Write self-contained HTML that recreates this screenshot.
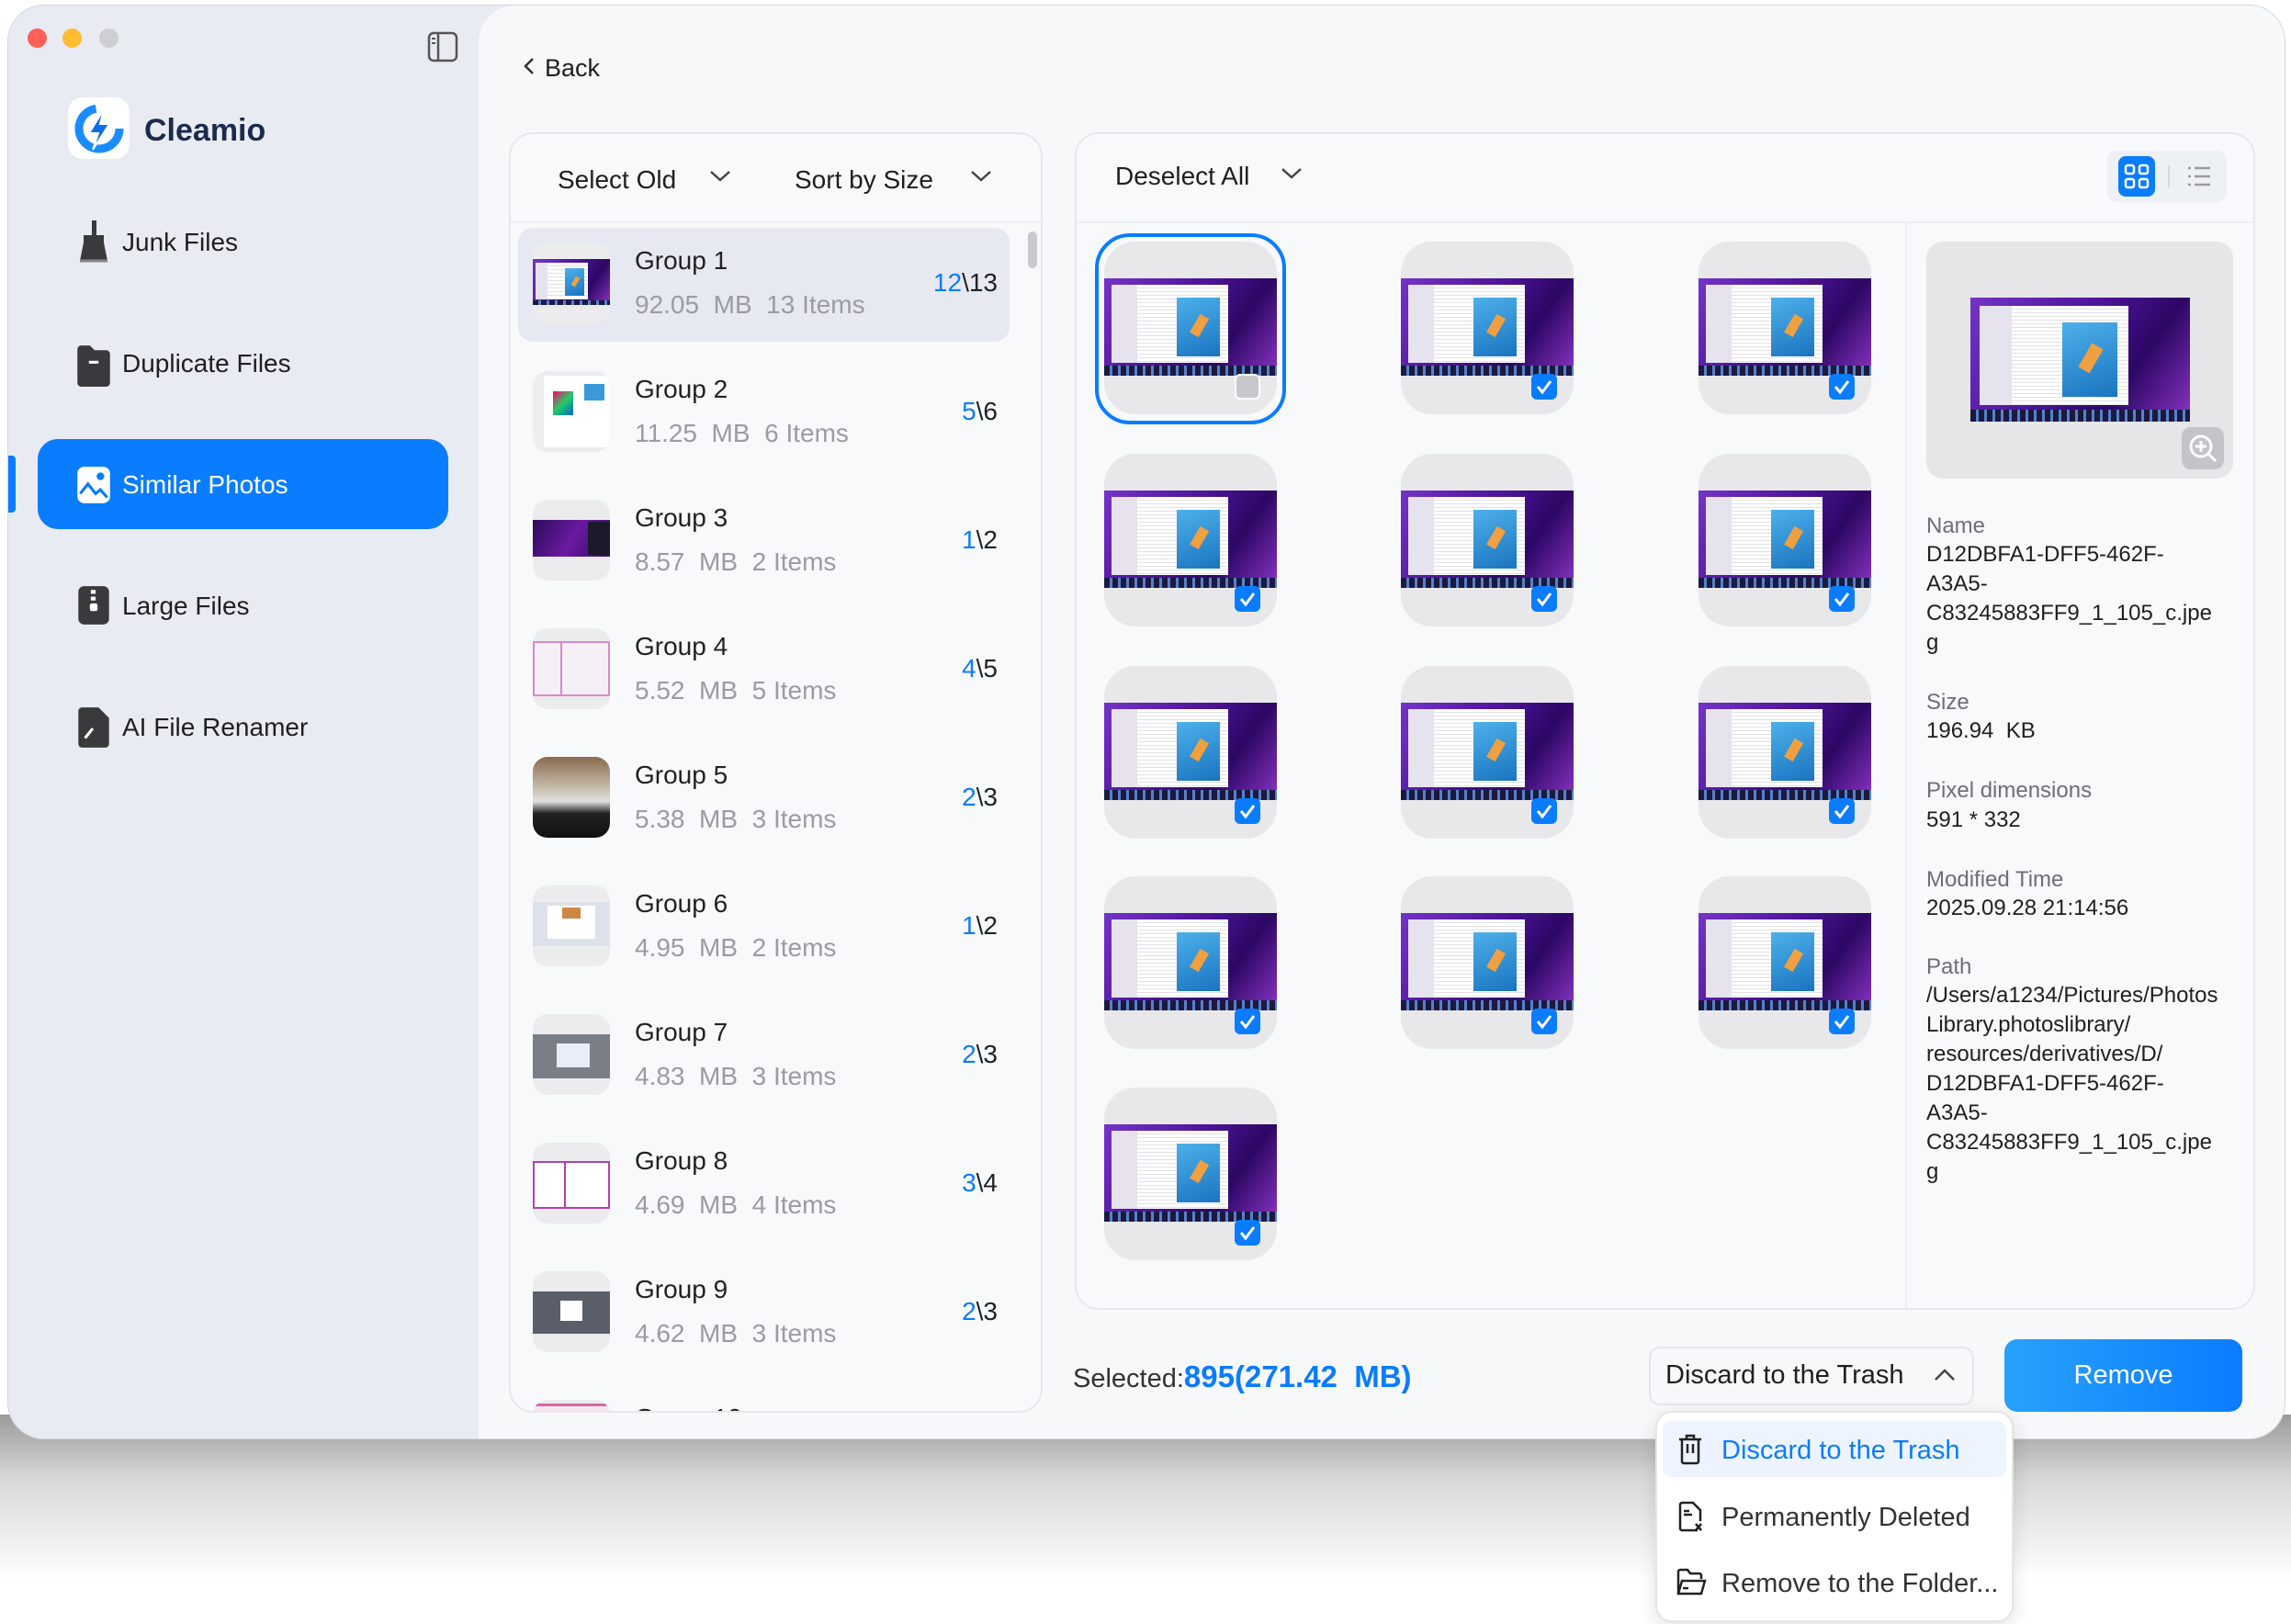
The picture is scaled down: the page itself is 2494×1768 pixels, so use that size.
<!DOCTYPE html>
<html><head><meta charset="utf-8">
<style>
*{margin:0;padding:0;box-sizing:border-box}
body{width:2494px;height:1768px;background:#fff;font-family:"Liberation Sans",sans-serif;position:relative;overflow:hidden;color:#1f1f1f}
.a{position:absolute}
#shadow{left:0;top:1540px;width:2494px;height:200px;background:linear-gradient(#9a9a9a,#d8d8d8 35%,#fff 90%)}
#win{left:8px;top:5px;width:2480px;height:1562px;background:#e9ebf2;border-radius:40px;overflow:hidden;border:1px solid #d6d8de}
#main{left:512px;top:0;width:1968px;height:1562px;background:#f7f8fa;border-radius:40px 0 0 0}
.tl{width:21px;height:21px;border-radius:50%;top:25px}
.nav{left:124px;font-size:28px;color:#1f1f1f;line-height:34px}
.ni{left:72px}
.panel{background:#f8f9fb;border:2px solid #e6e8ec;border-radius:26px;overflow:hidden}
.hd{font-size:28px;color:#1f1f1f}
.gt{left:135px;font-size:28px;color:#222}
.gs{left:135px;font-size:28px;color:#9a9ca2}
.gc{right:30px;font-size:28px;color:#222}
.gc b{color:#0a7cff;font-weight:normal}
.th{left:27px;width:84px;height:88px;background:#ececee;border-radius:16px;overflow:hidden}
.shot{position:absolute;background:linear-gradient(125deg,#7434c8 0%,#4b1396 45%,#2c0764 70%,#8a34c2 100%);overflow:hidden}
.shot i{position:absolute;display:block}
.shot .d{left:4%;top:7%;width:68%;height:80%;background:repeating-linear-gradient(#fff 0 3px,#e2e2e6 3px 4px);}
.shot .s{left:4%;top:7%;width:15%;height:80%;background:#e6e2ee}
.shot .p{left:42%;top:20%;width:25%;height:60%;background:linear-gradient(160deg,#4db0ea,#1a74c0)}
.shot .f{left:52%;top:38%;width:6%;height:22%;background:#f0a040;transform:rotate(30deg)}
.shot .k{left:0;bottom:0;width:100%;height:10%;background:repeating-linear-gradient(90deg,#1a1a40 0 6px,#5a80c8 6px 9px)}
.tile{position:absolute;width:188px;height:188px;background:#e8e8ea;border-radius:34px;overflow:hidden}
.tile .shot{left:0;top:40px;width:188px;height:106px}
.ck{position:absolute;left:142px;top:144px;width:28px;height:28px;border-radius:6px;background:#0a7cff}
.lbl{left:2096px;font-size:24px;color:#6c6f76}
.val{left:2096px;font-size:24px;color:#1f1f1f;line-height:32px}
.mi{left:2074px;font-size:29px;color:#333}
</style></head><body>
<div class="a" id="shadow"></div>
<div class="a" id="win">
 <div class="a tl" style="left:21px;background:#fe5f57"></div>
 <div class="a tl" style="left:59px;background:#febc2e"></div>
 <div class="a tl" style="left:99px;background:#cfcfd2"></div>
 <svg class="a" style="left:456px;top:28px" width="34" height="34" viewBox="0 0 34 34"><rect x="2" y="2" width="30" height="30" rx="5" fill="none" stroke="#555" stroke-width="2.5"/><line x1="12" y1="2" x2="12" y2="32" stroke="#555" stroke-width="2.5"/><line x1="5" y1="8" x2="9" y2="8" stroke="#555" stroke-width="2"/><line x1="5" y1="13" x2="9" y2="13" stroke="#555" stroke-width="2"/></svg>
 <div class="a" style="left:65px;top:100px;width:67px;height:67px;background:#fff;border-radius:16px"></div>
 <svg class="a" style="left:70px;top:105px" width="58" height="58" viewBox="0 0 58 58"><circle cx="29" cy="29" r="22" fill="none" stroke="#1a8cff" stroke-width="9" stroke-dasharray="100 40"/><path d="M34 8 L18 34 L28 34 L22 52 L40 24 L30 24 Z" fill="#0a6ee8" stroke="#fff" stroke-width="2"/></svg>
 <div class="a" style="left:148px;top:117px;font-size:34px;font-weight:bold;color:#1c2b4c">Cleamio</div>

 <svg class="a ni" style="top:232px" width="42" height="50" viewBox="0 0 38 50"><rect x="17" y="2" width="5" height="16" fill="#3a3a3c"/><path d="M8 18h22v8l4 20H4l4-20z" fill="#3a3a3c"/><path d="M4 46h30" stroke="#888" stroke-width="3"/></svg>
 <div class="a nav" style="top:241px">Junk Files</div>
 <svg class="a ni" style="top:368px" width="42" height="48" viewBox="0 0 38 46"><path d="M2 6a4 4 0 0 1 4-4h9l5 5h12a4 4 0 0 1 4 4v30a4 4 0 0 1-4 4H6a4 4 0 0 1-4-4z" fill="#3a3a3c"/><rect x="14" y="18" width="10" height="3" fill="#fff"/></svg>
 <div class="a nav" style="top:373px">Duplicate Files</div>
 <div class="a" style="left:0;top:490px;width:8px;height:62px;background:#0a7cff;border-radius:0 4px 4px 0"></div>
 <div class="a" style="left:32px;top:472px;width:447px;height:98px;background:#0a7cff;border-radius:22px"></div>
 <svg class="a ni" style="top:500px" width="42" height="46" viewBox="0 0 38 44"><rect x="2" y="2" width="34" height="38" rx="7" fill="#fff"/><circle cx="26" cy="12" r="4" fill="#0a7cff"/><path d="M5 30 L13 20 L21 30 L26 26 L33 34" fill="none" stroke="#0a7cff" stroke-width="3"/></svg>
 <div class="a nav" style="top:505px;color:#fff">Similar Photos</div>
 <svg class="a ni" style="top:630px" width="42" height="48" viewBox="0 0 38 46"><rect x="3" y="2" width="32" height="40" rx="6" fill="#3a3a3c"/><rect x="16" y="6" width="5" height="4" fill="#fff"/><rect x="16" y="13" width="5" height="4" fill="#fff"/><rect x="15" y="20" width="8" height="8" rx="2" fill="#fff"/></svg>
 <div class="a nav" style="top:637px">Large Files</div>
 <svg class="a ni" style="top:762px" width="42" height="48" viewBox="0 0 38 46"><path d="M3 6a4 4 0 0 1 4-4h17l11 11v27a4 4 0 0 1-4 4H7a4 4 0 0 1-4-4z" fill="#3a3a3c"/><path d="M10 34l8-10" stroke="#fff" stroke-width="3"/></svg>
 <div class="a nav" style="top:769px">AI File Renamer</div>

 <div class="a" id="main">
  <svg class="a" style="left:47px;top:55px" width="16" height="22" viewBox="0 0 16 22"><path d="M12 3 L4 11 L12 19" fill="none" stroke="#333" stroke-width="2.5"/></svg>
  <div class="a" style="left:72px;top:53px;font-size:27px;color:#1f1f1f">Back</div>

  <!-- left panel -->
  <div class="a panel" style="left:33px;top:138px;width:581px;height:1394px">
   <div class="a hd" style="left:51px;top:34px">Select Old</div>
   <svg class="a" style="left:216px;top:38px" width="24" height="16"><path d="M2 3 L12 12 L22 3" fill="none" stroke="#444" stroke-width="2.5"/></svg>
   <div class="a hd" style="left:309px;top:34px">Sort by Size</div>
   <svg class="a" style="left:500px;top:38px" width="24" height="16"><path d="M2 3 L12 12 L22 3" fill="none" stroke="#444" stroke-width="2.5"/></svg>
   <div class="a" style="left:0;top:95px;width:581px;height:2px;background:#eef0f3"></div>
   <div class="a" style="left:8px;top:102px;width:535px;height:124px;background:#e6e9f1;border-radius:16px"></div>
   <div class="a" style="left:563px;top:106px;width:10px;height:40px;background:#c8cacf;border-radius:5px"></div>

   <div class="a" style="left:0;top:100px;width:560px;height:1300px">
    <div class="a" style="left:0;top:0;width:560px;height:124px">
     <div class="a th" style="top:18px;left:24px"><div class="shot" style="left:0;top:18px;width:84px;height:50px"><i class="d"></i><i class="s"></i><i class="p"></i><i class="f"></i><i class="k"></i></div></div>
     <div class="a gt" style="top:22px">Group 1</div><div class="a gs" style="top:70px">92.05&nbsp; MB&nbsp; 13 Items</div><div class="a gc" style="top:46px"><b>12</b>\13</div>
    </div>
    <div class="a" style="left:0;top:140px;width:560px;height:124px">
     <div class="a th" style="top:18px;left:24px"><div class="a" style="left:0;top:5px;width:84px;height:78px;background:#fff;border-left:12px solid #eee"></div><div class="a" style="left:22px;top:22px;width:22px;height:26px;background:linear-gradient(135deg,#f06,#2c6,#06c)"></div><div class="a" style="left:56px;top:14px;width:22px;height:18px;background:#3a9ad8"></div></div>
     <div class="a gt" style="top:22px">Group 2</div><div class="a gs" style="top:70px">11.25&nbsp; MB&nbsp; 6 Items</div><div class="a gc" style="top:46px"><b>5</b>\6</div>
    </div>
    <div class="a" style="left:0;top:280px;width:560px;height:124px">
     <div class="a th" style="top:18px;left:24px"><div class="a" style="left:0;top:22px;width:84px;height:40px;background:linear-gradient(120deg,#2a0a5a,#6a1aa0,#3a0a70)"></div><div class="a" style="left:60px;top:24px;width:24px;height:36px;background:#1a1a2a"></div></div>
     <div class="a gt" style="top:22px">Group 3</div><div class="a gs" style="top:70px">8.57&nbsp; MB&nbsp; 2 Items</div><div class="a gc" style="top:46px"><b>1</b>\2</div>
    </div>
    <div class="a" style="left:0;top:420px;width:560px;height:124px">
     <div class="a th" style="top:18px;left:24px"><div class="a" style="left:0;top:14px;width:84px;height:60px;background:#f4f0f6;border:2px solid #d98ac8"></div><div class="a" style="left:30px;top:16px;width:2px;height:56px;background:#d98ac8"></div></div>
     <div class="a gt" style="top:22px">Group 4</div><div class="a gs" style="top:70px">5.52&nbsp; MB&nbsp; 5 Items</div><div class="a gc" style="top:46px"><b>4</b>\5</div>
    </div>
    <div class="a" style="left:0;top:560px;width:560px;height:124px">
     <div class="a th" style="top:18px;left:24px"><div class="a" style="left:0;top:0;width:84px;height:88px;background:linear-gradient(#8a6a50,#c8c0b0 40%,#e0e0e0 55%,#222 70%,#111)"></div></div>
     <div class="a gt" style="top:22px">Group 5</div><div class="a gs" style="top:70px">5.38&nbsp; MB&nbsp; 3 Items</div><div class="a gc" style="top:46px"><b>2</b>\3</div>
    </div>
    <div class="a" style="left:0;top:700px;width:560px;height:124px">
     <div class="a th" style="top:18px;left:24px"><div class="a" style="left:0;top:18px;width:84px;height:48px;background:#dde2ea"></div><div class="a" style="left:16px;top:22px;width:52px;height:36px;background:#fff"></div><div class="a" style="left:32px;top:24px;width:20px;height:12px;background:#c84"></div></div>
     <div class="a gt" style="top:22px">Group 6</div><div class="a gs" style="top:70px">4.95&nbsp; MB&nbsp; 2 Items</div><div class="a gc" style="top:46px"><b>1</b>\2</div>
    </div>
    <div class="a" style="left:0;top:840px;width:560px;height:124px">
     <div class="a th" style="top:18px;left:24px"><div class="a" style="left:0;top:22px;width:84px;height:48px;background:#7a7e86"></div><div class="a" style="left:26px;top:32px;width:36px;height:26px;background:#e8eef8"></div></div>
     <div class="a gt" style="top:22px">Group 7</div><div class="a gs" style="top:70px">4.83&nbsp; MB&nbsp; 3 Items</div><div class="a gc" style="top:46px"><b>2</b>\3</div>
    </div>
    <div class="a" style="left:0;top:980px;width:560px;height:124px">
     <div class="a th" style="top:18px;left:24px"><div class="a" style="left:0;top:20px;width:84px;height:52px;background:#fff;border:2px solid #b040b0"></div><div class="a" style="left:34px;top:20px;width:2px;height:52px;background:#b040b0"></div></div>
     <div class="a gt" style="top:22px">Group 8</div><div class="a gs" style="top:70px">4.69&nbsp; MB&nbsp; 4 Items</div><div class="a gc" style="top:46px"><b>3</b>\4</div>
    </div>
    <div class="a" style="left:0;top:1120px;width:560px;height:124px">
     <div class="a th" style="top:18px;left:24px"><div class="a" style="left:0;top:22px;width:84px;height:46px;background:#5a5e68"></div><div class="a" style="left:30px;top:32px;width:24px;height:22px;background:#fff"></div></div>
     <div class="a gt" style="top:22px">Group 9</div><div class="a gs" style="top:70px">4.62&nbsp; MB&nbsp; 3 Items</div><div class="a gc" style="top:46px"><b>2</b>\3</div>
    </div>
    <div class="a" style="left:0;top:1260px;width:560px;height:124px">
     <div class="a th" style="top:18px;left:24px"><div class="a" style="left:0;top:4px;width:84px;height:40px;background:#f4e8f0;border-top:3px solid #d06aa8"></div></div>
     <div class="a gt" style="top:22px">Group 10</div>
    </div>
   </div>
  </div>

  <!-- right panel -->
  <div class="a panel" style="left:649px;top:138px;width:1285px;height:1282px">
   <div class="a hd" style="left:42px;top:30px">Deselect All</div>
   <svg class="a" style="left:222px;top:35px" width="24" height="16"><path d="M2 3 L12 12 L22 3" fill="none" stroke="#444" stroke-width="2.5"/></svg>
   <div class="a" style="left:1122px;top:18px;width:130px;height:56px;background:#edf0f5;border-radius:10px"></div>
   <div class="a" style="left:1134px;top:24px;width:40px;height:44px;background:#0a7cff;border-radius:8px"></div>
   <svg class="a" style="left:1140px;top:32px" width="28" height="28" viewBox="0 0 28 28"><g fill="none" stroke="#fff" stroke-width="2.5"><rect x="2" y="2" width="9" height="9" rx="2"/><rect x="17" y="2" width="9" height="9" rx="2"/><rect x="2" y="17" width="9" height="9" rx="2"/><rect x="17" y="17" width="9" height="9" rx="2"/></g></svg>
   <div class="a" style="left:1188px;top:34px;width:2px;height:24px;background:#d6d8dd"></div>
   <svg class="a" style="left:1208px;top:34px" width="28" height="24" viewBox="0 0 28 24"><g stroke="#9a9ca2" stroke-width="2.5"><line x1="2" y1="3" x2="5" y2="3"/><line x1="9" y1="3" x2="26" y2="3"/><line x1="2" y1="12" x2="5" y2="12"/><line x1="9" y1="12" x2="26" y2="12"/><line x1="2" y1="21" x2="5" y2="21"/><line x1="9" y1="21" x2="26" y2="21"/></g></svg>
   <div class="a" style="left:0;top:95px;width:1285px;height:2px;background:#eceef2"></div>
   <div class="a" style="left:902px;top:97px;width:2px;height:1190px;background:#eceef2"></div>
  </div>

  <div class="a" style="left:-520px;top:-5px;width:2494px;height:1568px">
   <div class="a" style="left:1191px;top:253px;width:208px;height:208px;border:4px solid #0a7cff;border-radius:38px"></div>
   <div class="tile" style="left:1201px;top:262px"><div class="shot"><i class="d"></i><i class="s"></i><i class="p"></i><i class="f"></i><i class="k"></i></div><div class="ck" style="background:#c8c8cc;border:2px solid #fff"></div></div>
   <div class="tile" style="left:1524px;top:262px"><div class="shot"><i class="d"></i><i class="s"></i><i class="p"></i><i class="f"></i><i class="k"></i></div><div class="ck"><svg width="28" height="28"><path d="M7 14l5 6 9-12" fill="none" stroke="#fff" stroke-width="3"/></svg></div></div>
   <div class="tile" style="left:1848px;top:262px"><div class="shot"><i class="d"></i><i class="s"></i><i class="p"></i><i class="f"></i><i class="k"></i></div><div class="ck"><svg width="28" height="28"><path d="M7 14l5 6 9-12" fill="none" stroke="#fff" stroke-width="3"/></svg></div></div>
   <div class="tile" style="left:1201px;top:493px"><div class="shot"><i class="d"></i><i class="s"></i><i class="p"></i><i class="f"></i><i class="k"></i></div><div class="ck"><svg width="28" height="28"><path d="M7 14l5 6 9-12" fill="none" stroke="#fff" stroke-width="3"/></svg></div></div>
   <div class="tile" style="left:1524px;top:493px"><div class="shot"><i class="d"></i><i class="s"></i><i class="p"></i><i class="f"></i><i class="k"></i></div><div class="ck"><svg width="28" height="28"><path d="M7 14l5 6 9-12" fill="none" stroke="#fff" stroke-width="3"/></svg></div></div>
   <div class="tile" style="left:1848px;top:493px"><div class="shot"><i class="d"></i><i class="s"></i><i class="p"></i><i class="f"></i><i class="k"></i></div><div class="ck"><svg width="28" height="28"><path d="M7 14l5 6 9-12" fill="none" stroke="#fff" stroke-width="3"/></svg></div></div>
   <div class="tile" style="left:1201px;top:724px"><div class="shot"><i class="d"></i><i class="s"></i><i class="p"></i><i class="f"></i><i class="k"></i></div><div class="ck"><svg width="28" height="28"><path d="M7 14l5 6 9-12" fill="none" stroke="#fff" stroke-width="3"/></svg></div></div>
   <div class="tile" style="left:1524px;top:724px"><div class="shot"><i class="d"></i><i class="s"></i><i class="p"></i><i class="f"></i><i class="k"></i></div><div class="ck"><svg width="28" height="28"><path d="M7 14l5 6 9-12" fill="none" stroke="#fff" stroke-width="3"/></svg></div></div>
   <div class="tile" style="left:1848px;top:724px"><div class="shot"><i class="d"></i><i class="s"></i><i class="p"></i><i class="f"></i><i class="k"></i></div><div class="ck"><svg width="28" height="28"><path d="M7 14l5 6 9-12" fill="none" stroke="#fff" stroke-width="3"/></svg></div></div>
   <div class="tile" style="left:1201px;top:953px"><div class="shot"><i class="d"></i><i class="s"></i><i class="p"></i><i class="f"></i><i class="k"></i></div><div class="ck"><svg width="28" height="28"><path d="M7 14l5 6 9-12" fill="none" stroke="#fff" stroke-width="3"/></svg></div></div>
   <div class="tile" style="left:1524px;top:953px"><div class="shot"><i class="d"></i><i class="s"></i><i class="p"></i><i class="f"></i><i class="k"></i></div><div class="ck"><svg width="28" height="28"><path d="M7 14l5 6 9-12" fill="none" stroke="#fff" stroke-width="3"/></svg></div></div>
   <div class="tile" style="left:1848px;top:953px"><div class="shot"><i class="d"></i><i class="s"></i><i class="p"></i><i class="f"></i><i class="k"></i></div><div class="ck"><svg width="28" height="28"><path d="M7 14l5 6 9-12" fill="none" stroke="#fff" stroke-width="3"/></svg></div></div>
   <div class="tile" style="left:1201px;top:1183px"><div class="shot"><i class="d"></i><i class="s"></i><i class="p"></i><i class="f"></i><i class="k"></i></div><div class="ck"><svg width="28" height="28"><path d="M7 14l5 6 9-12" fill="none" stroke="#fff" stroke-width="3"/></svg></div></div>

   <div class="a" style="left:2096px;top:262px;width:334px;height:258px;background:#e6e6e8;border-radius:18px"></div>
   <div class="shot" style="left:2144px;top:323px;width:239px;height:135px"><i class="d"></i><i class="s"></i><i class="p"></i><i class="f"></i><i class="k"></i></div>
   <div class="a" style="left:2374px;top:464px;width:46px;height:46px;background:#c4c4c8;border-radius:10px"></div>
   <svg class="a" style="left:2379px;top:469px" width="36" height="36" viewBox="0 0 36 36"><circle cx="16" cy="16" r="11" fill="none" stroke="#fff" stroke-width="3"/><path d="M16 10v12M10 16h12M24 24l8 8" stroke="#fff" stroke-width="3"/></svg>

   <div class="a lbl" style="top:558px">Name</div>
   <div class="a val" style="top:587px">D12DBFA1-DFF5-462F-<br>A3A5-<br>C83245883FF9_1_105_c.jpe<br>g</div>
   <div class="a lbl" style="top:750px">Size</div>
   <div class="a val" style="top:779px">196.94&nbsp; KB</div>
   <div class="a lbl" style="top:846px">Pixel dimensions</div>
   <div class="a val" style="top:876px">591 * 332</div>
   <div class="a lbl" style="top:943px">Modified Time</div>
   <div class="a val" style="top:972px">2025.09.28 21:14:56</div>
   <div class="a lbl" style="top:1038px">Path</div>
   <div class="a val" style="top:1067px">/Users/a1234/Pictures/Photos<br>Library.photoslibrary/<br>resources/derivatives/D/<br>D12DBFA1-DFF5-462F-<br>A3A5-<br>C83245883FF9_1_105_c.jpe<br>g</div>

   <div class="a" style="left:1167px;top:1479px;font-size:29px;color:#333">Selected:<span style="color:#0a7cff;font-size:33px;font-weight:bold">895(271.42&nbsp; MB)</span></div>
   <div class="a" style="left:1794px;top:1465px;width:354px;height:64px;background:#f7f8fa;border:2px solid #e4e6ea;border-radius:12px"></div>
   <div class="a" style="left:1812px;top:1480px;font-size:29px;color:#1f1f1f">Discard to the Trash</div>
   <svg class="a" style="left:2104px;top:1488px" width="24" height="16"><path d="M2 13 L12 3 L22 13" fill="none" stroke="#444" stroke-width="2.5"/></svg>
   <div class="a" style="left:2181px;top:1457px;width:259px;height:79px;background:linear-gradient(90deg,#27a2fb,#0a7cff);border-radius:14px;color:#fff;font-size:29px;text-align:center;line-height:79px">Remove</div>
  </div>
 </div>
</div>

<div class="a" style="left:1802px;top:1536px;width:390px;height:230px;background:#fff;border:2px solid #e4e5e8;border-radius:18px;box-shadow:0 6px 20px rgba(0,0,0,.12)"></div>
<div class="a" style="left:1810px;top:1547px;width:374px;height:61px;background:#edf4ff;border-radius:10px"></div>
<svg class="a" style="left:1826px;top:1561px" width="28" height="34" viewBox="0 0 28 34"><path d="M10 5V2h8v3M2 6h24M5 6v24a2 2 0 0 0 2 2h14a2 2 0 0 0 2-2V6M11 11v10M17 11v10" fill="none" stroke="#222" stroke-width="2.5"/></svg>
<div class="a mi" style="left:1874px;top:1563px;color:#0a7cff">Discard to the Trash</div>
<svg class="a" style="left:1826px;top:1634px" width="30" height="34" viewBox="0 0 30 34"><path d="M22 32H5a2 2 0 0 1-2-2V4a2 2 0 0 1 2-2h12l8 8v12M7 11h6M7 15h9M20 25l6 7M26 25l-6 7" fill="none" stroke="#222" stroke-width="2.5"/></svg>
<div class="a mi" style="left:1874px;top:1636px">Permanently Deleted</div>
<svg class="a" style="left:1824px;top:1707px" width="34" height="32" viewBox="0 0 34 32"><path d="M3 28V4a2 2 0 0 1 2-2h8l3 4h10a2 2 0 0 1 2 2v4M3 28l4-14h25l-4 14zM8 22h6" fill="none" stroke="#222" stroke-width="2.5"/></svg>
<div class="a mi" style="left:1874px;top:1708px">Remove to the Folder...</div>
</body></html>
